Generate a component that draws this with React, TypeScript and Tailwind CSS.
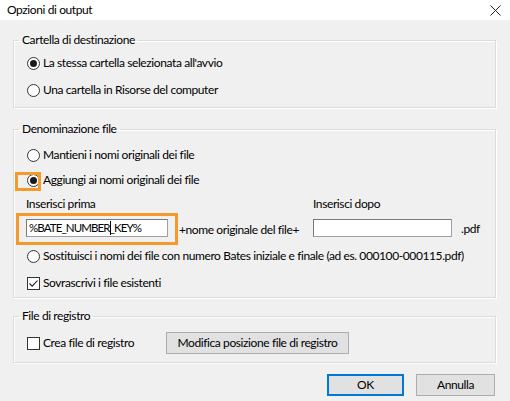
import type { ReactNode } from "react"

function Radio({ checked = false }: { checked?: boolean }) {
  return (
    <span className="flex h-[13px] w-[13px] shrink-0 items-center justify-center rounded-full border border-[#333333] bg-white">
      {checked && <span className="h-[7px] w-[7px] rounded-full bg-[#1a1a1a]" />}
    </span>
  )
}

function Checkbox({ checked = false }: { checked?: boolean }) {
  return (
    <span className="flex h-[13px] w-[13px] shrink-0 items-center justify-center border border-[#333333] bg-white">
      {checked && (
        <svg width="11" height="11" viewBox="0 0 11 11" fill="none">
          <path d="M1.5 5.5 L4.2 8.2 L9.5 2.5" stroke="#1a1a1a" strokeWidth="1.1" />
        </svg>
      )}
    </span>
  )
}

function Option({ control, label }: { control: ReactNode; label: string }) {
  return (
    <div className="flex h-[18px] items-center gap-[3px] whitespace-nowrap pl-[13px]">
      {control}
      <span>{label}</span>
    </div>
  )
}

function Group({
  title,
  className,
  children,
}: {
  title: string
  className: string
  children: ReactNode
}) {
  return (
    <fieldset className={"border border-[#dcdcdc] shadow-[inset_1px_1px_0_#ffffff,1px_1px_0_#ffffff] " + className}>
      <legend className="ml-[5px] px-[3px] leading-[16px]">{title}</legend>
      {children}
    </fieldset>
  )
}

function Button({ label, primary = false, className = "" }: { label: string; primary?: boolean; className?: string }) {
  return (
    <button
      className={
        "flex h-[22px] items-center justify-center whitespace-nowrap bg-[#e1e1e1] " +
        (primary ? "border-2 border-[#0078d7] " : "border border-[#adadad] ") +
        className
      }
    >
      {label}
    </button>
  )
}

export default function App() {
  return (
    <div
      className="relative h-[401px] w-[510px] overflow-hidden bg-[#f0f0f0] text-[12px] leading-[16px] tracking-[-0.4px] text-[#000000]"
      style={{ fontFamily: 'Lato, "Noto Sans", sans-serif' }}
    >
      {/* title bar */}
      <div className="flex h-[20px] items-center justify-between bg-white pl-[7px] pr-[9px]">
        <span>Opzioni di output</span>
        <svg width="11" height="11" viewBox="0 0 11 11" stroke="#222222" strokeWidth="1">
          <path d="M0.5 0.5 L10.5 10.5 M10.5 0.5 L0.5 10.5" />
        </svg>
      </div>

      <div className="flex flex-col px-[13px] pr-[14px]">
        <Group title="Cartella di destinazione" className="mt-[12px] flex flex-col gap-[9px] pt-[6px] pb-[8px]">
          <Option control={<Radio checked />} label="La stessa cartella selezionata all'avvio" />
          <Option control={<Radio />} label="Una cartella in Risorse del computer" />
        </Group>

        <Group title="Denominazione file" className="mt-[13px] flex flex-col pt-[9px] pb-[5px]">
          <Option control={<Radio />} label="Mantieni i nomi originali dei file" />
          <div className="mt-[7px]">
            <Option control={<Radio checked />} label="Aggiungi ai nomi originali dei file" />
          </div>
          <div className="mt-[7px] grid grid-cols-[142px_145px_139px_auto] gap-y-[7px] pl-[12px]">
            <span>Inserisci prima</span>
            <span />
            <span>Inserisci dopo</span>
            <span />
            <div className="flex h-[18px] items-center border border-[#a0a0a0] border-t-[#7a7a7a] border-l-[#7a7a7a] bg-white pl-[2px] text-[11.5px] tracking-[-0.9px]">
              <span>%BATE_NUMBER</span>
              <span className="-mr-px inline-block h-[14px] w-px bg-black" />
              <span>_KEY%</span>
            </div>
            <span className="flex items-center whitespace-nowrap pl-[11px] pt-[3px]">+nome originale del file+</span>
            <div className="h-[18px] border border-[#a0a0a0] border-t-[#7a7a7a] border-l-[#7a7a7a] bg-white" />
            <span className="flex items-center pl-[9px]">.pdf</span>
          </div>
          <div className="mt-[9px]">
            <Option
              control={<Radio />}
              label="Sostituisci i nomi dei file con numero Bates iniziale e finale (ad es. 000100-000115.pdf)"
            />
          </div>
          <div className="mt-[9px]">
            <Option control={<Checkbox checked />} label="Sovrascrivi i file esistenti" />
          </div>
        </Group>

        <Group title="File di registro" className="mt-[10px] pt-[8px] pb-[8px]">
          <div className="flex h-[22px] items-center">
            <div className="w-[152px]">
              <Option control={<Checkbox />} label="Crea file di registro" />
            </div>
            <Button label="Modifica posizione file di registro" className="w-[183px]" />
          </div>
        </Group>

        <div className="mt-[11px] flex justify-end gap-[12px] pr-[1px]">
          <Button label="OK" primary className="w-[77px]" />
          <Button label="Annulla" className="w-[79px]" />
        </div>
      </div>

      {/* orange annotation frames */}
      <div className="pointer-events-none absolute left-[15px] top-[172px] h-[19px] w-[26px] border-[3px] border-[#f39a2b]" />
      <div className="pointer-events-none absolute left-[16px] top-[213px] h-[32px] w-[162px] border-[3px] border-[#f39a2b]" />
    </div>
  )
}
